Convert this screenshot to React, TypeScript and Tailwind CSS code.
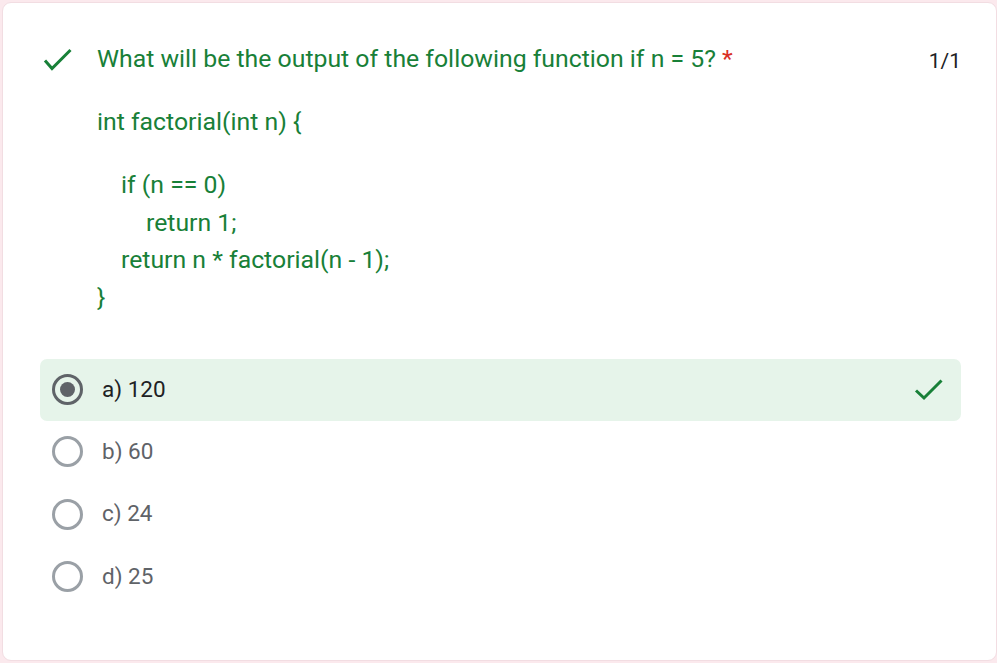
import React from "react";

function Radio({ checked }: { checked?: boolean }) {
  return (
    <div className={`w-[31px] h-[31px] rounded-full border-[3px] flex items-center justify-center shrink-0 ${checked ? "border-[#5f6368]" : "border-[#9aa0a6]"}`}>
      {checked && <div className="w-[15px] h-[15px] rounded-full bg-[#5f6368]" />}
    </div>
  );
}

const options = [
  { label: "a) 120", checked: true },
  { label: "b) 60" },
  { label: "c) 24" },
  { label: "d) 25" },
];

export default function App() {
  return (
    <div className="w-[997px] h-[663px] bg-[#fbe9ed] pt-[2px] pl-[2px] pb-[2px] overflow-hidden" style={{ fontFamily: "Roboto, 'Noto Sans', sans-serif" }}>
      <div className="h-full bg-white rounded-[9px] border border-[#f2dde2] pl-[37px] pr-[35px] pt-[35px]">
        <div className="flex items-start">
          <div className="w-[57px] pt-[9px] pl-[2px]">
            <svg width="32" height="26" viewBox="0 0 32 26" fill="none">
              <path d="M3 13.5L10 21.5L28.5 3" stroke="#188038" strokeWidth="3" />
            </svg>
          </div>
          <div className="flex-1 text-[#188038] text-[24.8px] leading-[42px]">
            <div>
              What will be the output of the following function if n = 5? <span className="text-[#d93025]">*</span>
            </div>
            <div className="mt-[21px]">int factorial(int n) {"{"}</div>
            <div className="mt-[23px] leading-[37.5px]">
              <div className="pl-[24px]">if (n == 0)</div>
              <div className="pl-[49px]">return 1;</div>
              <div className="pl-[24px]">return n * factorial(n - 1);</div>
              <div>{"}"}</div>
            </div>
          </div>
          <div className="text-[#202124] text-[21px] leading-[42px] pt-[2px]">1/1</div>
        </div>
        <div className="mt-[43px] flex flex-col">
          {options.map((o) => (
            <div
              key={o.label}
              className={`flex items-center rounded-[7px] pl-[12px] pr-[16px] ${o.checked ? "bg-[#e6f4ea] h-[61.5px]" : "h-[62.5px]"}`}
            >
              <Radio checked={o.checked} />
              <div className={`ml-[19px] flex-1 text-[22.5px] ${o.checked ? "text-[#202124]" : "text-[#5f6368]"}`}>{o.label}</div>
              {o.checked && (
                <svg width="32" height="26" viewBox="0 0 32 26" fill="none">
                  <path d="M3 13.5L11 21L28.5 3.5" stroke="#188038" strokeWidth="3" />
                </svg>
              )}
            </div>
          ))}
        </div>
      </div>
    </div>
  );
}
